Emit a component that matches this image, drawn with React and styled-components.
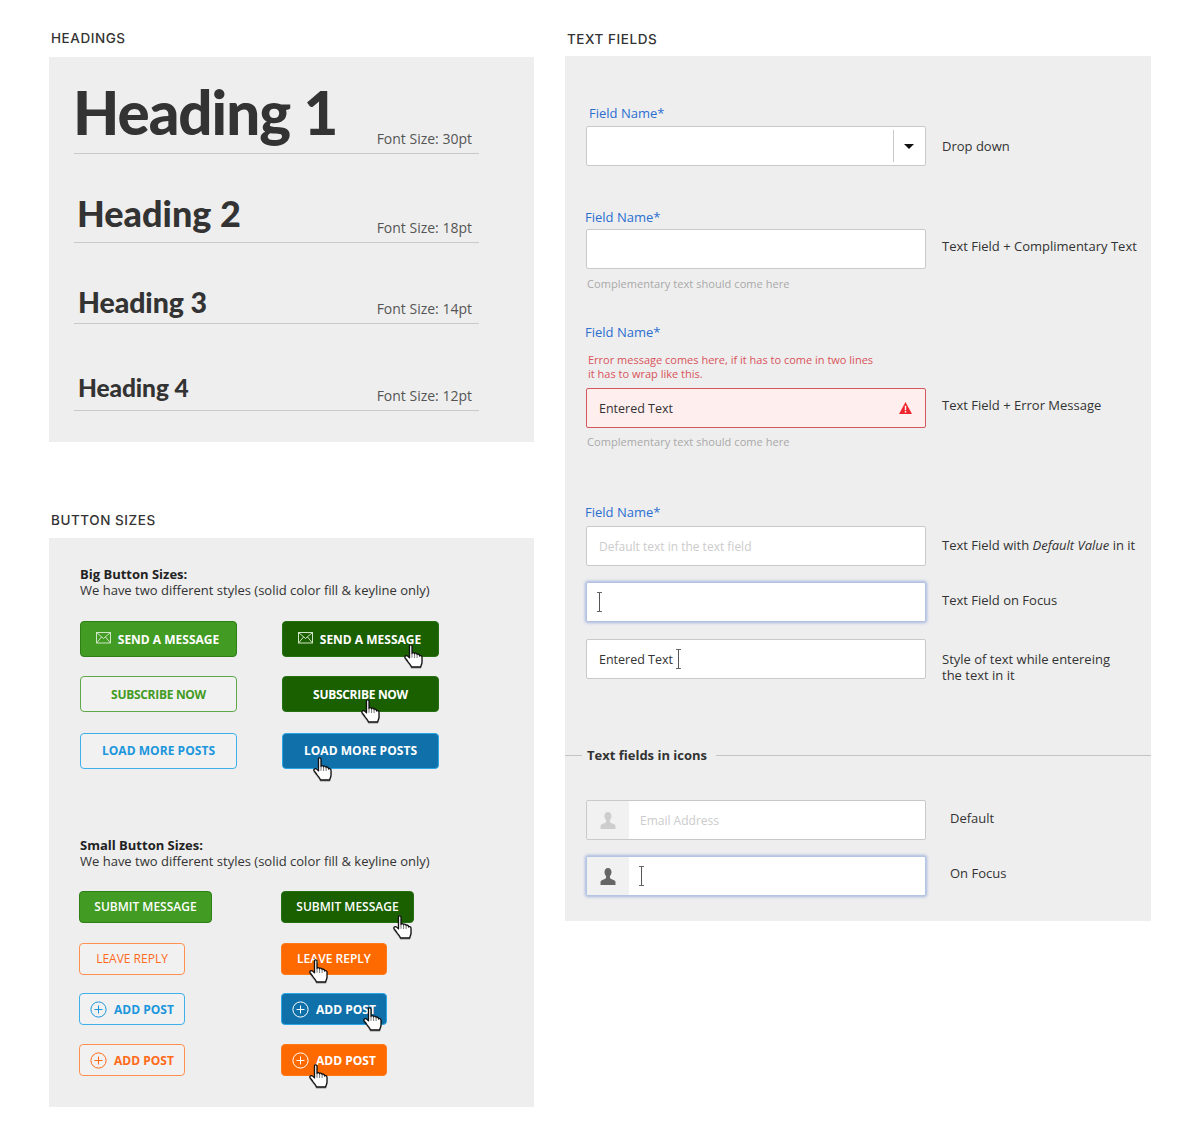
import styled, { createGlobalStyle } from "styled-components";

const GlobalStyle = createGlobalStyle`
  html, body { margin: 0; padding: 0; background: #fff; }
  body { font-family: "Open Sans", "Liberation Sans", sans-serif; color: #333; }
  * { box-sizing: border-box; }
`;

const Page = styled.div`
  width: 1194px;
  height: 1137px;
  display: grid;
  grid-template-columns: 485px 586px;
  column-gap: 31px;
  padding-left: 49px;
  align-items: start;
`;

const Column = styled.div`
  display: flex;
  flex-direction: column;
`;

const SectionTitle = styled.h2`
  margin: ${(p) => p.$top}px 0 0 ${(p) => p.$left || 2}px;
  height: ${(p) => p.$height}px;
  font-family: "Inter", "Liberation Sans", sans-serif;
  font-size: 13.5px;
  font-weight: 500;
  line-height: 18px;
  color: #333;
  letter-spacing: 0.55px;
`;

const Panel = styled.section`
  background: #eee;
  height: ${(p) => p.$height}px;
  padding: ${(p) => p.$pad || "0"};
`;

/* headings */
const HeadingRow = styled.div`
  width: 405px;
  height: ${(p) => p.$height}px;
  display: flex;
  align-items: flex-end;
  justify-content: space-between;
  border-bottom: 1px solid #c9c9c9;
`;

const HeadingText = styled.div`
  margin: 0 0 ${(p) => p.$bottom}px ${(p) => p.$left}px;
  font-family: "Lato", "Liberation Sans", sans-serif;
  font-weight: 900;
  font-size: ${(p) => p.$size}px;
  line-height: 1.2;
  color: #333;
  letter-spacing: ${(p) => p.$spacing}px;
`;

const SizeNote = styled.span`
  margin: 0 7px 5px 0;
  font-size: 14px;
  line-height: 19px;
  color: #555;
`;

/* buttons */
const Intro = styled.p`
  margin: ${(p) => p.$top || 0}px 0 0;
  font-size: 13px;
  line-height: 16px;
  color: #333;
  strong { font-weight: 700; display: block; color: #222; }
`;

const ButtonGrid = styled.div`
  margin: ${(p) => p.$top}px 0 0 ${(p) => p.$left || 0}px;
  display: grid;
  grid-template-columns: 202px auto;
  grid-template-rows: ${(p) => p.$rows};
  justify-items: start;
`;

const tones = {
  green: { fill: "#429b22", edge: "#2f7f17", line: "#5fa84a", text: "#429b22" },
  dark: { fill: "#1a5f00", edge: "#257012", line: "#1a5f00", text: "#1a5f00" },
  blue: { fill: "#1070aa", edge: "#2aa5e5", line: "#3db0ea", text: "#1b96dc" },
  orange: { fill: "#ff6a00", edge: "#ff7a1a", line: "#ff9150", text: "#ff6a1a" },
};

const Button = styled.div`
  position: relative;
  width: ${(p) => p.$width}px;
  height: ${(p) => p.$height}px;
  display: flex;
  align-items: center;
  justify-content: center;
  gap: 7px;
  padding-bottom: ${(p) => p.$lift || 0}px;
  padding-right: ${(p) => p.$nudge || 0}px;
  border-radius: 4px;
  font-size: 12px;
  font-weight: ${(p) => p.$weight || 700};
  letter-spacing: ${(p) => p.$spacing || 0}px;
  white-space: nowrap;
  border: 1px solid ${(p) => (p.$outline ? tones[p.$tone].line : tones[p.$tone].edge)};
  background: ${(p) => (p.$outline ? "#f1f1f1" : tones[p.$tone].fill)};
  color: ${(p) => (p.$outline ? tones[p.$tone].text : "#fff")};
`;

const HandSpot = styled.svg`
  position: absolute;
  left: ${(p) => p.$x - 1}px;
  top: ${(p) => p.$y - 1}px;
  width: 19px;
  height: 24px;
  filter: drop-shadow(0 1px 0 rgba(0, 0, 0, 0.25));
`;

const Hand = ({ x, y }) => (
  <HandSpot $x={x} $y={y} viewBox="0 0 19 24">
    <path
      d="M5.5 2C5.5.4 8 .4 8 2v7.6c0-1.3 2.6-1.3 2.6.3 0-1.2 2.5-1.1 2.5.7 0-1 2.5-.8 2.5 1v.4c.2-.8 2.4-.6 2.4 1.2V18c0 2-1 3.2-1.4 5H7.5C7 21 5 19.5 3.5 17L1 13.6c-.8-1.4 1.4-2.8 3-1.2l1.5 1.5Z"
      fill="#fff"
      stroke="#111"
      strokeWidth="1.3"
      strokeLinejoin="round"
    />
    <path d="M8 9.6v4.2M10.6 10v4M13.1 10.6v3.4" fill="none" stroke="#555" strokeWidth="0.8" />
  </HandSpot>
);

const MailIcon = () => (
  <svg width="15" height="12" viewBox="0 0 15 12" fill="none" stroke="#cfe6c6" strokeWidth="1" style={{ marginTop: -3 }}>
    <rect x="0.5" y="0.5" width="14" height="10.5" />
    <path d="M.5.5l7 6 7-6M.5 11l5-6M14.5 11l-5-6" />
  </svg>
);

const PlusIcon = () => (
  <svg width="17" height="17" viewBox="0 0 17 17" fill="none" stroke="currentColor" strokeWidth="1">
    <circle cx="8.5" cy="8.5" r="7.6" />
    <path d="M8.5 4.5v8M4.5 8.5h8" />
  </svg>
);

/* text fields */
const Group = styled.div`
  margin: ${(p) => p.$top}px 0 0 21px;
`;

const FieldLabel = styled.label`
  display: block;
  margin-left: ${(p) => p.$left || 0}px;
  height: 20px;
  margin-bottom: ${(p) => p.$bottom ?? 2}px;
  font-size: 13px;
  line-height: 20px;
  color: #2b6fd1;
`;

const FieldRow = styled.div`
  display: flex;
  align-items: center;
  margin-top: ${(p) => p.$top || 0}px;
`;

const Input = styled.div`
  width: 340px;
  height: 40px;
  flex: none;
  display: flex;
  align-items: center;
  overflow: hidden;
  padding-left: ${(p) => (p.$icon ? 0 : 12)}px;
  background: ${(p) => (p.$error ? "#ffeeee" : "#fff")};
  border: 1px solid ${(p) => (p.$error ? "#d4595f" : p.$focus ? "#b4c4e2" : "#c9c9c9")};
  border-radius: 2px;
  box-shadow: ${(p) => (p.$focus ? "0 0 3px 1px rgba(120, 150, 215, 0.6)" : "none")};
  font-size: 12.5px;
  font-weight: 500;
  color: #333;
`;

const Placeholder = styled.span`
  font-size: 12px;
  font-weight: 400;
  color: #cbcbcb;
`;

const Caret = styled.span`
  display: block;
  width: 5px;
  height: 20px;
  margin-left: ${(p) => p.$left || 0}px;
  border-top: 1px solid #666;
  border-bottom: 1px solid #666;
  background: linear-gradient(#555, #555) center / 1px 100% no-repeat;
`;

const DropButton = styled.div`
  margin-left: auto;
  width: 32px;
  height: 32px;
  flex: none;
  display: flex;
  align-items: center;
  justify-content: center;
  padding-right: 2px;
  border-left: 1px solid #c9c9c9;
  &::after {
    content: "";
    border-left: 5px solid transparent;
    border-right: 5px solid transparent;
    border-top: 5px solid #111;
  }
`;

const ErrorIcon = styled.svg`
  margin-left: auto;
  margin-right: 13px;
  flex: none;
`;

const RowNote = styled.div`
  margin: 0 0 ${(p) => p.$lift || 0}px ${(p) => p.$left || 16}px;
  font-size: 13px;
  line-height: 16px;
  color: #333;
`;

// two-line note: stays inside the field's 40px height, text may run past it
const TallRowNote = styled(RowNote)`
  height: 40px;
  padding-top: 12px;
`;

const HelpText = styled.div`
  margin: ${(p) => p.$top}px 0 0 1px;
  font-size: 11px;
  line-height: 14px;
  letter-spacing: 0.06px;
  color: #a9a9a9;
`;

const ErrorText = styled.div`
  margin: 11px 0 7px 2px;
  font-size: 11px;
  line-height: 14px;
  color: #d9535a;
`;

const Divider = styled.div`
  margin-top: 66px;
  display: flex;
  align-items: center;
  gap: 5px;
  height: 20px;
  font-size: 13px;
  font-weight: 700;
  color: #333;
  &::before {
    content: "";
    width: 17px;
    height: 1px;
    background: #c4c4c4;
  }
  &::after {
    content: "";
    flex: 1;
    height: 1px;
    margin-left: 4px;
    background: #c4c4c4;
  }
`;

const IconCell = styled.div`
  width: 42px;
  height: 100%;
  flex: none;
  margin-right: ${(p) => p.$gap}px;
  display: flex;
  align-items: center;
  justify-content: center;
  background: #f1f1f1;
  color: ${(p) => p.$color};
`;

const PersonIcon = () => (
  <svg width="16" height="17" viewBox="0 0 16 17" fill="currentColor">
    <path d="M8 0c2.2 0 3.5 1.7 3.5 4 0 1.7-.7 3.2-1.600 4.2v1.500c0 .6 1 1.100 2.400 1.700 1.800.7 3.200 1.300 3.200 2.600v3H.5v-3c0-1.300 1.400-1.900 3.200-2.600 1.400-.6 2.400-1.100 2.400-1.700V8.200C5.200 7.200 4.500 5.700 4.500 4 4.500 1.700 5.800 0 8 0Z" />
  </svg>
);

const bigRows = "55px 57px 36px";
const smallRows = "52px 50px 51px 32px";

export default function App() {
  return (
    <>
      <GlobalStyle />
      <Page>
        <Column>
          <SectionTitle $top={29} $height={28}>HEADINGS</SectionTitle>
          <Panel $height={385} $pad="27px 0 0 25px">
            <HeadingRow $height={70}>
              <HeadingText $size={60} $left={-1} $bottom={5} $spacing={-1}>Heading 1</HeadingText>
              <SizeNote>Font Size: 30pt</SizeNote>
            </HeadingRow>
            <HeadingRow $height={89}>
              <HeadingText $size={36} $left={3} $bottom={7} $spacing={0}>Heading 2</HeadingText>
              <SizeNote>Font Size: 18pt</SizeNote>
            </HeadingRow>
            <HeadingRow $height={81}>
              <HeadingText $size={28.5} $left={4} $bottom={4} $spacing={-0.1}>Heading 3</HeadingText>
              <SizeNote>Font Size: 14pt</SizeNote>
            </HeadingRow>
            <HeadingRow $height={87}>
              <HeadingText $size={24.5} $left={4} $bottom={8} $spacing={-0.1}>Heading 4</HeadingText>
              <SizeNote>Font Size: 12pt</SizeNote>
            </HeadingRow>
          </Panel>

          <SectionTitle $top={69} $height={27}>BUTTON SIZES</SectionTitle>
          <Panel $height={569} $pad="28px 0 0 31px">
            <Intro>
              <strong>Big Button Sizes:</strong>
              We have two different styles (solid color fill &amp; keyline only)
            </Intro>
            <ButtonGrid $top={23} $rows={bigRows}>
              <Button $tone="green" $width={157} $height={36} $nudge={2}>
                <MailIcon />SEND A MESSAGE
              </Button>
              <Button $tone="dark" $width={157} $height={36} $nudge={2}>
                <MailIcon />SEND A MESSAGE
                <Hand x={122} y={23} />
              </Button>
              <Button $tone="green" $outline $width={157} $height={36} $spacing={-0.3}>SUBSCRIBE NOW</Button>
              <Button $tone="dark" $width={157} $height={36} $spacing={-0.3}>
                SUBSCRIBE NOW
                <Hand x={79} y={23} />
              </Button>
              <Button $tone="blue" $outline $width={157} $height={36} $spacing={0.05} $lift={2}>LOAD MORE POSTS</Button>
              <Button $tone="blue" $width={157} $height={36} $spacing={0.05} $lift={2}>
                LOAD MORE POSTS
                <Hand x={31} y={24} />
              </Button>
            </ButtonGrid>

            <Intro $top={68}>
              <strong>Small Button Sizes:</strong>
              We have two different styles (solid color fill &amp; keyline only)
            </Intro>
            <ButtonGrid $top={22} $left={-1} $rows={smallRows}>
              <Button $tone="green" $width={133} $height={32} $weight={600} $lift={2}>SUBMIT MESSAGE</Button>
              <Button $tone="dark" $width={133} $height={32} $weight={600} $lift={2}>
                SUBMIT MESSAGE
                <Hand x={112} y={24} />
              </Button>
              <Button $tone="orange" $outline $width={106} $height={32} $weight={400} $lift={2}>LEAVE REPLY</Button>
              <Button $tone="orange" $width={106} $height={32} $weight={600} $lift={2}>
                LEAVE REPLY
                <Hand x={28} y={16} />
              </Button>
              <Button $tone="blue" $outline $width={106} $height={32}><PlusIcon />ADD POST</Button>
              <Button $tone="blue" $width={106} $height={32}>
                <PlusIcon />ADD POST
                <Hand x={82} y={14} />
              </Button>
              <Button $tone="orange" $outline $width={106} $height={32}><PlusIcon />ADD POST</Button>
              <Button $tone="orange" $width={106} $height={32}>
                <PlusIcon />ADD POST
                <Hand x={28} y={20} />
              </Button>
            </ButtonGrid>
          </Panel>
        </Column>

        <Column>
          <SectionTitle $top={30} $height={26}>TEXT FIELDS</SectionTitle>
          <Panel $height={865} $pad="47px 0 0">
            <Group $top={0}>
              <FieldLabel $left={3} $bottom={3}>Field Name*</FieldLabel>
              <FieldRow>
                <Input>
                  <DropButton />
                </Input>
                <RowNote>Drop down</RowNote>
              </FieldRow>
            </Group>

            <Group $top={41}>
              <FieldLabel $left={-1}>Field Name*</FieldLabel>
              <FieldRow>
                <Input />
                <RowNote $lift={6}>Text Field + Complimentary Text</RowNote>
              </FieldRow>
              <HelpText $top={8}>Complementary text should come here</HelpText>
            </Group>

            <Group $top={31}>
              <FieldLabel $left={-1} $bottom={0}>Field Name*</FieldLabel>
              <ErrorText>
                Error message comes here, if it has to come in two lines<br />
                it has to wrap like this.
              </ErrorText>
              <FieldRow>
                <Input $error>
                  Entered Text
                  <ErrorIcon width="13" height="12" viewBox="0 0 13 12">
                    <path d="M6.5 0L13 12H0Z" fill="#f0262e" />
                    <path d="M5.8 3.8h1.4v4.4H5.8zM5.8 9h1.4v1.4H5.8z" fill="#fff" />
                  </ErrorIcon>
                </Input>
                <RowNote $lift={6}>Text Field + Error Message</RowNote>
              </FieldRow>
              <HelpText $top={7}>Complementary text should come here</HelpText>
            </Group>

            <Group $top={53}>
              <FieldLabel $left={-1} $bottom={4}>Field Name*</FieldLabel>
              <FieldRow>
                <Input><Placeholder>Default text in the text field</Placeholder></Input>
                <RowNote $lift={2}>Text Field with <em>Default Value</em> in it</RowNote>
              </FieldRow>
              <FieldRow $top={16}>
                <Input $focus><Caret $left={-2} /></Input>
                <RowNote $lift={4}>Text Field on Focus</RowNote>
              </FieldRow>
              <FieldRow $top={17}>
                <Input>Entered Text<Caret $left={3} /></Input>
                <TallRowNote>Style of text while entereing<br />the text in it</TallRowNote>
              </FieldRow>
            </Group>

            <Divider>Text fields in icons</Divider>

            <Group $top={35}>
              <FieldRow>
                <Input $icon>
                  <IconCell $color="#cdcdcd" $gap={11}><PersonIcon /></IconCell>
                  <Placeholder>Email Address</Placeholder>
                </Input>
                <RowNote $left={24} $lift={4}>Default</RowNote>
              </FieldRow>
              <FieldRow $top={16}>
                <Input $icon $focus>
                  <IconCell $color="#666" $gap={10}><PersonIcon /></IconCell>
                  <Caret />
                </Input>
                <RowNote $left={24} $lift={6}>On Focus</RowNote>
              </FieldRow>
            </Group>
          </Panel>
        </Column>
      </Page>
    </>
  );
}
